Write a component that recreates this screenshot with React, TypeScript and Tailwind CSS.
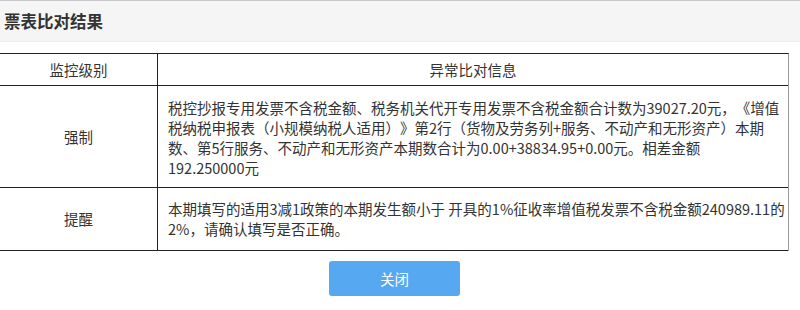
import React from "react";

export default function App() {
  const font = {
    fontFamily: '"Noto Sans CJK SC", "Noto Sans", sans-serif',
  } as React.CSSProperties;
  return (
    <div
      className="w-[800px] h-[310px] bg-white text-[#333] overflow-hidden [text-spacing-trim:space-all]"
      style={font}
    >
      <div className="h-[42px] border-t border-t-[#c8c8c8] border-b border-b-[#ececec] bg-[#f5f5f5] flex items-center pl-[4px] text-[16.5px] font-bold text-[#333]">
        票表比对结果
      </div>
      <div className="mt-[11px] w-[789px] border-t border-t-[#222] border-r border-r-[#999] text-[14.5px] leading-[20px]">
        <div className="grid grid-cols-[158px_630px] border-b border-b-[#222]">
          <div className="h-[31px] border-r border-r-[#222] flex items-center justify-center">
            监控级别
          </div>
          <div className="flex items-center justify-center">异常比对信息</div>
        </div>
        <div className="grid grid-cols-[158px_630px] border-b border-b-[#222]">
          <div className="h-[101px] border-r border-r-[#222] flex items-center justify-center">
            强制
          </div>
          <div className="flex items-center pl-[10px] pr-[4px] pt-[3px] whitespace-nowrap">
            <div>
              税控抄报专用发票不含税金额、税务机关代开专用发票不含税金额合计数为39027.20元，《增值
              <br />
              税纳税申报表（小规模纳税人适用）》第2行（货物及劳务列+服务、不动产和无形资产）本期
              <br />
              数、第5行服务、不动产和无形资产本期数合计为0.00+38834.95+0.00元。相差金额
              <br />
              192.250000元
            </div>
          </div>
        </div>
        <div className="grid grid-cols-[158px_630px] border-b border-b-[#222]">
          <div className="h-[62px] border-r border-r-[#222] flex items-center justify-center">
            提醒
          </div>
          <div className="flex items-center pl-[10px] pr-[4px] whitespace-nowrap">
            <div>
              本期填写的适用3减1政策的本期发生额小于 开具的1%征收率增值税发票不含税金额240989.11的
              <br />
              2%，请确认填写是否正确。
            </div>
          </div>
        </div>
      </div>
      <div className="w-[789px] flex justify-center mt-[10px]">
        <button className="w-[131px] h-[35px] rounded-[3px] bg-[#56a9f1] text-white text-[14.5px] flex items-center justify-center">
          关闭
        </button>
      </div>
    </div>
  );
}
